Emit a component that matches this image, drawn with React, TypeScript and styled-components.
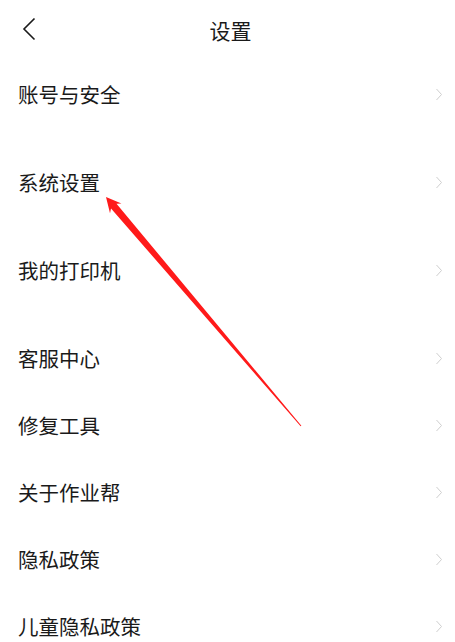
import React from "react";
import styled, { createGlobalStyle } from "styled-components";

const Global = createGlobalStyle`
  html, body { margin: 0; padding: 0; background: #ffffff; }
  body { font-family: "Noto Sans CJK SC", "Noto Sans", sans-serif; }
`;

const Page = styled.div`
  position: relative;
  width: 455px;
  height: 642px;
  overflow: hidden;
  background: #ffffff;
  display: flex;
  flex-direction: column;
`;

const Header = styled.header`
  height: 61px;
  flex: none;
  display: flex;
  align-items: center;
  justify-content: center;
  position: relative;
`;

const BackButton = styled.div`
  position: absolute;
  left: 20px;
  top: 16px;
  width: 18px;
  height: 26px;
  display: flex;
  align-items: center;
  justify-content: center;
`;

const Title = styled.h1`
  margin: 0;
  font-size: 21px;
  font-weight: 400;
  color: #1a1a1a;
  line-height: 1;
  transform: translate(3px, 0);
`;

const List = styled.div`
  display: flex;
  flex-direction: column;
`;

const Row = styled.div<{ $gap?: boolean }>`
  height: 67px;
  flex: none;
  display: flex;
  align-items: center;
  justify-content: space-between;
  padding: 0 12px 0 18px;
  margin-bottom: ${(p) => (p.$gap ? "21px" : "0")};
`;

const Label = styled.span`
  font-size: 20.5px;
  color: #1a1a1a;
  line-height: 1;
`;

const Chevron = () => (
  <svg width="8" height="13" viewBox="0 0 8 13">
    <polyline points="1.5,1 6.5,6.5 1.5,12" fill="none" stroke="#cfcfcf" strokeWidth="1" />
  </svg>
);

const Overlay = styled.svg`
  position: absolute;
  left: 0;
  top: 0;
  pointer-events: none;
`;

const items: { label: string; gap?: boolean }[] = [
  { label: "账号与安全", gap: true },
  { label: "系统设置", gap: true },
  { label: "我的打印机", gap: true },
  { label: "客服中心" },
  { label: "修复工具" },
  { label: "关于作业帮" },
  { label: "隐私政策" },
  { label: "儿童隐私政策" },
];

function arrowPath() {
  const tip = { x: 106, y: 197 };
  const tail = { x: 301, y: 426 };
  const dx = tail.x - tip.x;
  const dy = tail.y - tip.y;
  const len = Math.hypot(dx, dy);
  const ux = dx / len;
  const uy = dy / len;
  const px = uy;
  const py = -ux;
  const headLen = 15;
  const headHalf = 7.5;
  const shaftHalf = 3.6;
  const base = { x: tip.x + ux * headLen, y: tip.y + uy * headLen };
  const neck = { x: tip.x + ux * (headLen - 3), y: tip.y + uy * (headLen - 3) };
  const pts = [
    [tip.x, tip.y],
    [base.x + px * headHalf, base.y + py * headHalf],
    [neck.x + px * shaftHalf, neck.y + py * shaftHalf],
    [tail.x + px * 0.5, tail.y + py * 0.5],
    [tail.x - px * 0.5, tail.y - py * 0.5],
    [neck.x - px * shaftHalf, neck.y - py * shaftHalf],
    [base.x - px * headHalf, base.y - py * headHalf],
  ];
  return pts.map((p) => `${p[0].toFixed(2)},${p[1].toFixed(2)}`).join(" ");
}

export default function App() {
  return (
    <Page>
      <Global />
      <Header>
        <BackButton>
          <svg width="14" height="24" viewBox="0 0 14 24">
            <polyline points="12.5,1.5 2,12 12.5,22.5" fill="none" stroke="#1a1a1a" strokeWidth="1.6" />
          </svg>
        </BackButton>
        <Title>设置</Title>
      </Header>
      <List>
        {items.map((it) => (
          <Row key={it.label} $gap={it.gap}>
            <Label>{it.label}</Label>
            <Chevron />
          </Row>
        ))}
      </List>
      <Overlay width="455" height="642" viewBox="0 0 455 642">
        <polygon points={arrowPath()} fill="#ff1a1a" />
      </Overlay>
    </Page>
  );
}
